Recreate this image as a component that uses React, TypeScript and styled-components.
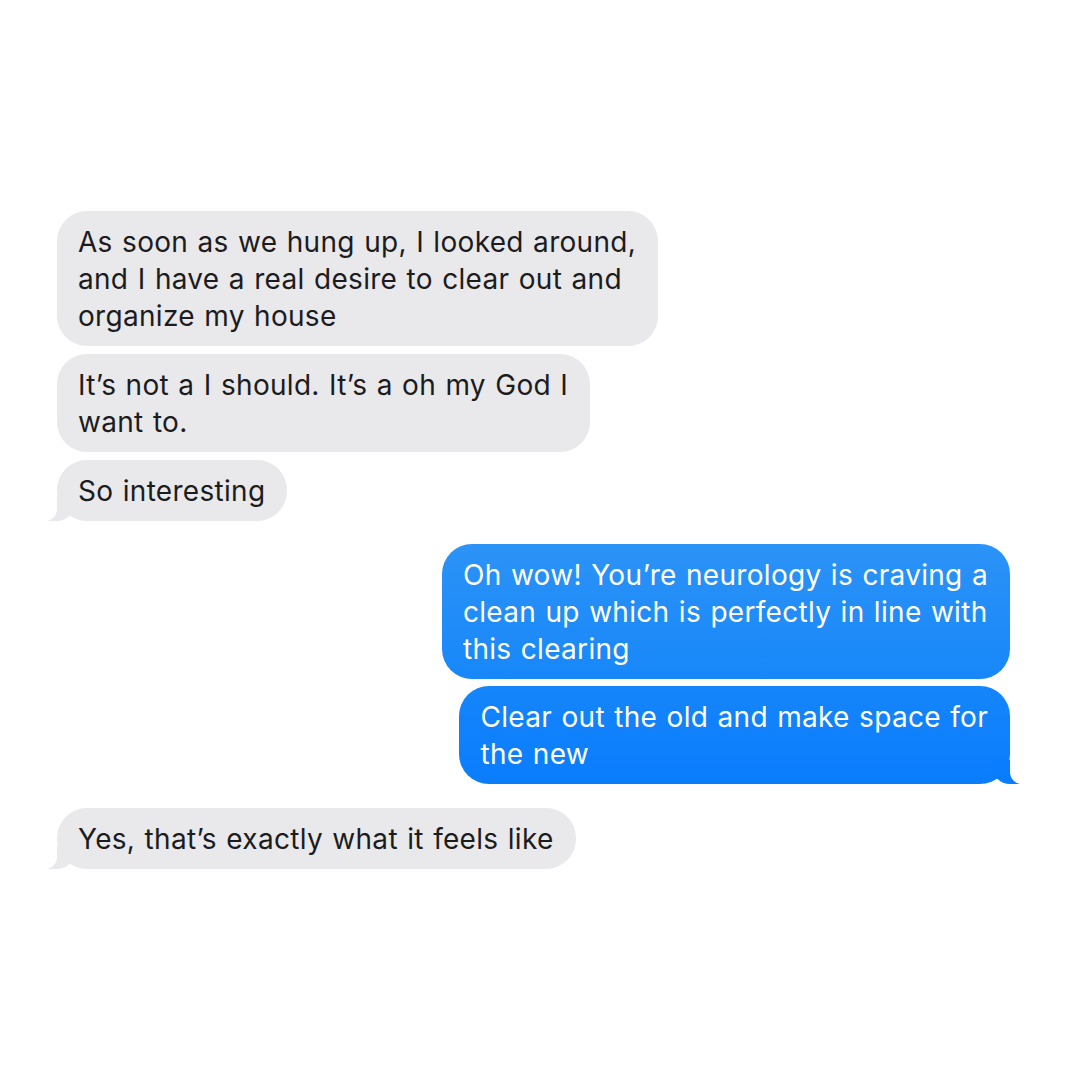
import React from "react";
import styled, { createGlobalStyle, css } from "styled-components";

const Global = createGlobalStyle`
  html, body { margin: 0; padding: 0; background: #ffffff; }
  body { font-family: Inter, "Noto Sans", "Liberation Sans", sans-serif; }
`;

const Page = styled.div`
  width: 1080px;
  height: 1080px;
  box-sizing: border-box;
  padding: 211px 70px 0 57px;
  display: flex;
  flex-direction: column;
  background: #ffffff;
`;

const Row = styled.div<{ $me?: boolean; $gap: number }>`
  display: flex;
  justify-content: ${(p) => (p.$me ? "flex-end" : "flex-start")};
  margin-top: ${(p) => p.$gap}px;
`;

const Bubble = styled.div<{ $me?: boolean; $tail?: boolean; $top?: string; $bottom?: string }>`
  position: relative;
  box-sizing: border-box;
  padding: 13px 22px 11px 21px;
  border-radius: 30px;
  font-size: 28px;
  line-height: 37px;
  letter-spacing: 0.3px;
  word-spacing: 1.2px;
  white-space: nowrap;
  color: ${(p) => (p.$me ? "#ffffff" : "#1c1c1e")};
  background: ${(p) =>
    p.$me ? `linear-gradient(180deg, ${p.$top} 0%, ${p.$bottom} 100%)` : "#e9e9eb"};

  ${(p) =>
    p.$tail &&
    !p.$me &&
    css`
      &::before {
        content: "";
        position: absolute;
        bottom: 0;
        left: -10px;
        width: 28px;
        height: 24px;
        background: #e9e9eb;
        border-bottom-right-radius: 18px;
      }
      &::after {
        content: "";
        position: absolute;
        bottom: 0;
        left: -26px;
        width: 26px;
        height: 24px;
        background: #ffffff;
        border-bottom-right-radius: 12px;
      }
    `}

  ${(p) =>
    p.$tail &&
    p.$me &&
    css`
      &::before {
        content: "";
        position: absolute;
        bottom: 0;
        right: -10px;
        width: 28px;
        height: 24px;
        background: ${p.$bottom};
        border-bottom-left-radius: 18px;
      }
      &::after {
        content: "";
        position: absolute;
        bottom: 0;
        right: -26px;
        width: 26px;
        height: 24px;
        background: #ffffff;
        border-bottom-left-radius: 12px;
      }
    `}
`;

const Text = styled.span`
  position: relative;
  z-index: 1;
`;

type Msg = { me?: boolean; tail?: boolean; gap: number; lines: string[]; top?: string; bottom?: string };

const messages: Msg[] = [
  {
    gap: 0,
    lines: [
      "As soon as we hung up, I looked around,",
      "and I have a real desire to clear out and",
      "organize my house",
    ],
  },
  { gap: 8, lines: ["It\u2019s not a I should. It\u2019s a oh my God I", "want to."] },
  { gap: 8, tail: true, lines: ["So interesting"] },
  {
    gap: 23,
    me: true,
    top: "#2c93f7",
    bottom: "#1787f9",
    lines: [
      "Oh wow! You\u2019re neurology is craving a",
      "clean up which is perfectly in line with",
      "this clearing",
    ],
  },
  {
    gap: 7,
    me: true,
    tail: true,
    top: "#1585fa",
    bottom: "#0a7dfe",
    lines: ["Clear out the old and make space for", "the new"],
  },
  { gap: 24, tail: true, lines: ["Yes, that\u2019s exactly what it feels like"] },
];

export default function App() {
  return (
    <>
      <Global />
      <Page>
        {messages.map((m, i) => (
          <Row key={i} $me={m.me} $gap={m.gap}>
            <Bubble $me={m.me} $tail={m.tail} $top={m.top} $bottom={m.bottom}>
              <Text>
                {m.lines.map((l, j) => (
                  <React.Fragment key={j}>
                    {j > 0 && <br />}
                    {l}
                  </React.Fragment>
                ))}
              </Text>
            </Bubble>
          </Row>
        ))}
      </Page>
    </>
  );
}
